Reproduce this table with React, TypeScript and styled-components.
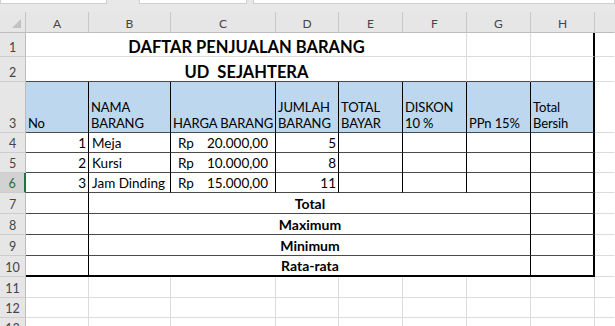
import React from "react";
import styled, { createGlobalStyle } from "styled-components";

const Global = createGlobalStyle`
  html, body { margin: 0; padding: 0; background: #ffffff; overflow: hidden; }
  body { font-family: "Lato", "Liberation Sans", sans-serif; color: #000; }
`;

type Edge = "grid" | "thin" | "dark" | "thick" | "none";
const edgeColor: Record<Edge, string> = {
  grid: "#dcdcdc",
  thin: "#000000",
  dark: "#4a4a4a",
  thick: "#000000",
  none: "transparent",
};
const edgeWidth: Record<Edge, number> = { grid: 1, thin: 1, dark: 1, thick: 2, none: 1 };

const Page = styled.div`
  width: 615px;
  height: 326px;
  display: flex;
  flex-direction: column;
  background: #fff;
  overflow: hidden;
`;

const TopStrip = styled.div`
  height: 12px;
  flex-shrink: 0;
  background: #e8e8e8;
  display: flex;
  gap: 6px;
  align-items: flex-start;
`;

const StripBox = styled.div<{ $w: number; $ml?: number }>`
  width: ${(p) => p.$w}px;
  margin-left: ${(p) => p.$ml ?? 0}px;
  height: 3px;
  background: #fff;
  border: 1px solid #cfcfcf;
  border-top: none;
`;

const Sheet = styled.div`
  flex-shrink: 0;
  display: grid;
  grid-template-columns: 26px 63px 82px 105px 63px 64px 64px 64px 64px 20px;
  grid-template-rows: 21px 24px 25px 51px 20px 20px 20px 21px 21px 21px 21px 21px 20px 20px;
`;

const Corner = styled.div`
  background: #e6e6e6;
  border-right: 1px solid #c4c4c4;
  border-bottom: 1px solid #bdbdbd;
  box-sizing: border-box;
  position: relative;
  &::after {
    content: "";
    position: absolute;
    right: 4px;
    bottom: 4px;
    width: 0;
    height: 0;
    border-left: 9px solid transparent;
    border-bottom: 9px solid #c2c2c2;
  }
`;

const ColHeader = styled.div<{ $last?: boolean }>`
  background: #e6e6e6;
  border-right: 1px solid ${(p) => (p.$last ? "transparent" : "#c9c9c9")};
  border-bottom: 1px solid #bdbdbd;
  box-sizing: border-box;
  display: flex;
  align-items: center;
  justify-content: center;
  font-size: 12px;
  color: #444;
  padding-top: 2px;
`;

const RowHeader = styled.div<{ $active?: boolean }>`
  background: ${(p) => (p.$active ? "#d2d2d2" : "#e6e6e6")};
  border-right: ${(p) => (p.$active ? "2px solid #217346" : "1px solid #bdbdbd")};
  border-bottom: 1px solid #cdcdcd;
  box-sizing: border-box;
  display: flex;
  align-items: flex-end;
  justify-content: center;
  padding-bottom: 1px;
  font-size: 12.5px;
  color: ${(p) => (p.$active ? "#217346" : "#444")};
  overflow: hidden;
`;

const Cell = styled.div<{
  $r?: Edge;
  $b?: Edge;
  $span?: number;
  $bg?: string;
  $align?: "left" | "right" | "center";
  $bold?: boolean;
  $size?: number;
  $wrap?: boolean;
}>`
  grid-column: span ${(p) => p.$span ?? 1};
  box-sizing: border-box;
  background: ${(p) => p.$bg ?? "transparent"};
  border-right: ${(p) => edgeWidth[p.$r ?? "grid"]}px solid ${(p) => edgeColor[p.$r ?? "grid"]};
  border-bottom: ${(p) => edgeWidth[p.$b ?? "grid"]}px solid ${(p) => edgeColor[p.$b ?? "grid"]};
  display: flex;
  align-items: flex-end;
  justify-content: ${(p) =>
    p.$align === "right" ? "flex-end" : p.$align === "center" ? "center" : "flex-start"};
  text-align: ${(p) => p.$align ?? "left"};
  padding: 0 2px 1px 3px;
  font-size: ${(p) => p.$size ?? 13.5}px;
  font-weight: ${(p) => (p.$bold ? 700 : 400)};
  line-height: 16px;
  white-space: ${(p) => (p.$wrap ? "normal" : "nowrap")};
  overflow: hidden;
  min-width: 0;
`;

const HeadCell = styled(Cell)`
  padding: 0 1px 1px 2px;
  letter-spacing: -0.1px;
`;

const Money = styled.div`
  flex: 1;
  display: flex;
  justify-content: space-between;
  padding-left: 4px;
  padding-right: 5px;
`;

const cols = ["A", "B", "C", "D", "E", "F", "G", "H", ""];

const items = [
  { no: 1, name: "Meja", price: "20.000,00", qty: 5 },
  { no: 2, name: "Kursi", price: "10.000,00", qty: 8 },
  { no: 3, name: "Jam Dinding", price: "15.000,00", qty: 11 },
];

const summary = ["Total", "Maximum", "Minimum", "Rata-rata"];

const headers: { text: string; wrap?: boolean }[] = [
  { text: "No" },
  { text: "NAMA BARANG", wrap: true },
  { text: "HARGA BARANG" },
  { text: "JUMLAH BARANG", wrap: true },
  { text: "TOTAL BAYAR", wrap: true },
  { text: "DISKON 10 %", wrap: true },
  { text: "PPn 15%" },
  { text: "Total Bersih", wrap: true },
];

export default function App() {
  return (
    <Page>
      <Global />
      <TopStrip>
        <StripBox $w={105} />
        <StripBox $w={106} $ml={26} />
        <StripBox $w={360} />
      </TopStrip>
      <Sheet>
        <Corner />
        {cols.map((c, i) => (
          <ColHeader key={i} $last={i === cols.length - 1}>
            {c}
          </ColHeader>
        ))}

        {/* Row 1 */}
        <RowHeader>1</RowHeader>
        <Cell $span={6} $align="center" $bold $size={16.5} $r="grid">
          DAFTAR PENJUALAN BARANG
        </Cell>
        <Cell />
        <Cell $r="thick" />
        <Cell $r="none" />

        {/* Row 2 */}
        <RowHeader>2</RowHeader>
        <Cell $span={6} $align="center" $bold $size={16.5} $b="dark">
          UD&nbsp;&nbsp;SEJAHTERA
        </Cell>
        <Cell $b="dark" />
        <Cell $r="thick" $b="dark" />
        <Cell $r="none" />

        {/* Row 3 */}
        <RowHeader>3</RowHeader>
        {headers.map((h, i) => (
          <HeadCell
            key={i}
            $bg="#bdd7ee"
            $r={i === 7 ? "thick" : "thin"}
            $b="dark"
            $wrap={h.wrap}
            $size={13}
          >
            {h.text}
          </HeadCell>
        ))}
        <Cell $r="none" />

        {/* Rows 4-6 */}
        {items.map((it, idx) => (
          <React.Fragment key={it.no}>
            <RowHeader $active={idx === 2}>{idx + 4}</RowHeader>
            <Cell $r="thin" $b="dark" $align="right">
              {it.no}
            </Cell>
            <Cell $r="thin" $b="dark">
              {it.name}
            </Cell>
            <Cell $r="thin" $b="dark">
              <Money>
                <span>Rp</span>
                <span>{it.price}</span>
              </Money>
            </Cell>
            <Cell $r="thin" $b="dark" $align="right">
              {it.qty}
            </Cell>
            <Cell $r="thin" $b="dark" />
            <Cell $r="thin" $b="dark" />
            <Cell $r="thin" $b="dark" />
            <Cell $r="thick" $b="dark" />
            <Cell $r="none" />
          </React.Fragment>
        ))}

        {/* Rows 7-10 */}
        {summary.map((s, i) => {
          const bottom: Edge = i === 3 ? "thick" : "dark";
          return (
            <React.Fragment key={s}>
              <RowHeader>{i + 7}</RowHeader>
              <Cell $r="thin" $b={bottom} />
              <Cell $span={6} $r="thin" $b={bottom} $align="center" $bold $size={14}>
                {s}
              </Cell>
              <Cell $r="thick" $b={bottom} />
              <Cell $r="none" />
            </React.Fragment>
          );
        })}

        {/* Rows 11-13 */}
        {[11, 12, 13].map((n) => (
          <React.Fragment key={n}>
            <RowHeader>{n}</RowHeader>
            {cols.map((_, i) => (
              <Cell key={i} $r={i === cols.length - 1 ? "none" : "grid"} />
            ))}
          </React.Fragment>
        ))}
      </Sheet>
    </Page>
  );
}
